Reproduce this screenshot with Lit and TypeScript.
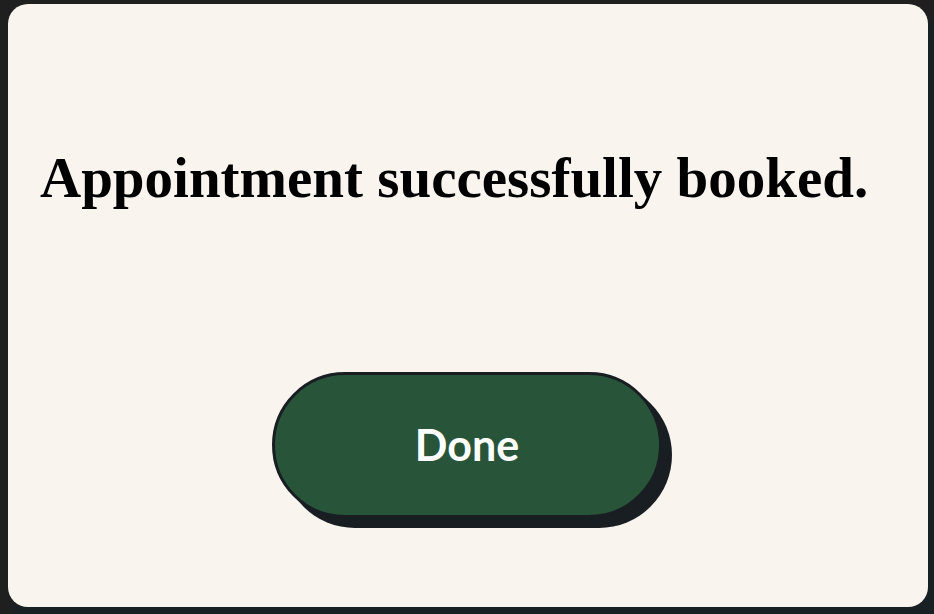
import { LitElement, html, css } from "lit";
import { customElement } from "lit/decorators.js";

@customElement("app-root")
export class AppRoot extends LitElement {
  static styles = css`
    :host {
      display: flex;
      box-sizing: border-box;
      min-height: 100vh;
      padding: 4px 6px 7px 8px;
      background:
        linear-gradient(to right, #1f1f1f 12px, transparent 14px),
        linear-gradient(to bottom, #1f1f1f 16px, transparent 24px),
        #182023;
    }
    .card {
      flex: 1;
      display: flex;
      flex-direction: column;
      align-items: center;
      justify-content: space-between;
      gap: 48px;
      box-sizing: border-box;
      padding: 142px 34px 89px 32px;
      border-radius: 20px;
      background: #f9f4ee;
    }
    .title {
      align-self: stretch;
      margin: 0;
      color: #000;
      font: 700 57px/64px "Liberation Serif", serif;
    }
    .done {
      box-sizing: border-box;
      min-width: 390px;
      min-height: 146px;
      padding: 0 48px;
      border: 3px solid #191e22;
      border-radius: 73px;
      background: #285439;
      box-shadow: 10px 10px 0 #191e22;
      color: #fff;
      font: 700 43px/48px Lato, sans-serif;
      cursor: pointer;
    }
  `;

  render() {
    return html`
      <main class="card">
        <h1 class="title">Appointment successfully booked.</h1>
        <button class="done" type="button">Done</button>
      </main>
    `;
  }
}
